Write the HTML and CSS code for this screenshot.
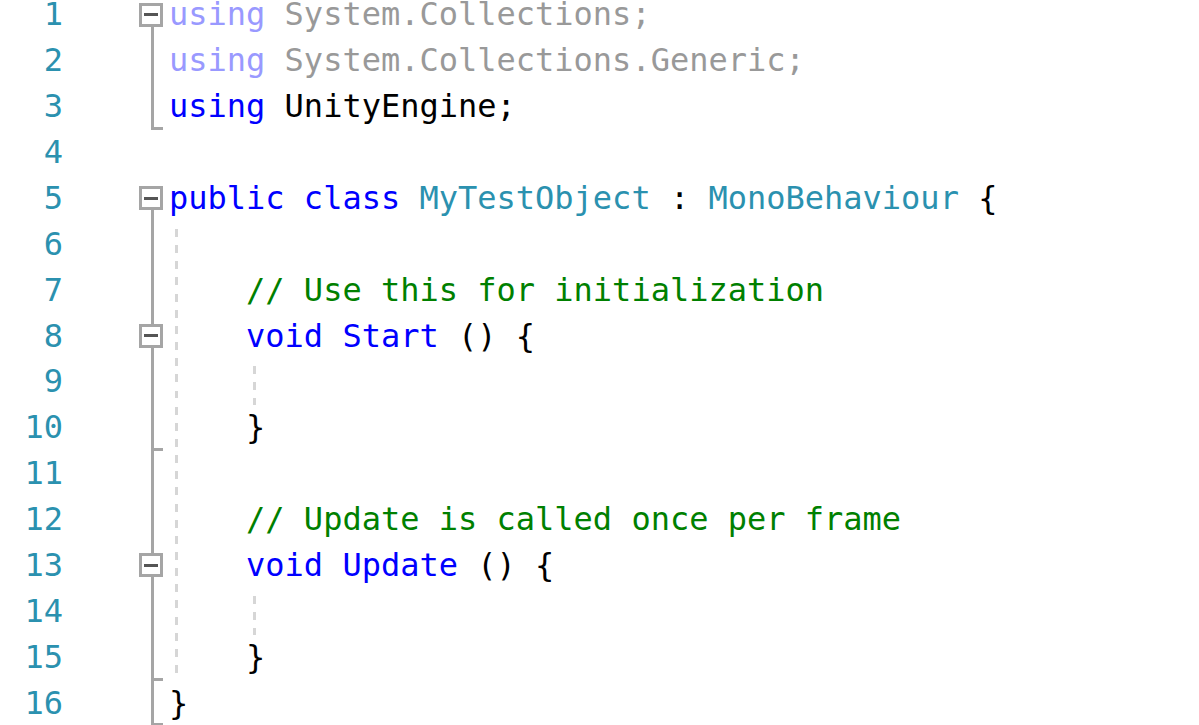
FILE: index.html
```html
<!DOCTYPE html>
<html>
<head>
<meta charset="utf-8">
<link rel="stylesheet" href="styles.css">
</head>
<body>
<div class="editor">
  <div class="row"><span class="ln">1</span><span class="fold f-top"><span class="box"></span></span><span class="code"><span class="fk">using</span> <span class="fd">System.Collections;</span></span></div>
  <div class="row"><span class="ln">2</span><span class="fold f-line"></span><span class="code"><span class="fk">using</span> <span class="fd">System.Collections.Generic;</span></span></div>
  <div class="row"><span class="ln">3</span><span class="fold f-end"></span><span class="code"><span class="kw">using</span> UnityEngine;</span></div>
  <div class="row"><span class="ln">4</span><span class="fold"></span><span class="code"></span></div>
  <div class="row"><span class="ln">5</span><span class="fold f-top"><span class="box"></span></span><span class="code"><span class="kw">public</span> <span class="kw">class</span> <span class="ty">MyTestObject</span> : <span class="ty">MonoBehaviour</span> {</span></div>
  <div class="block">
    <div class="row"><span class="ln">6</span><span class="fold f-line"></span><span class="code"></span></div>
    <div class="row"><span class="ln">7</span><span class="fold f-line"></span><span class="code">    <span class="cm">// Use this for initialization</span></span></div>
    <div class="row"><span class="ln">8</span><span class="fold f-line"><span class="box"></span></span><span class="code">    <span class="kw">void</span> <span class="kw">Start</span> () {</span></div>
    <div class="row guide2"><span class="ln">9</span><span class="fold f-line"></span><span class="code"></span></div>
    <div class="row"><span class="ln">10</span><span class="fold f-end"></span><span class="code">    }</span></div>
    <div class="row"><span class="ln">11</span><span class="fold f-line"></span><span class="code"></span></div>
    <div class="row"><span class="ln">12</span><span class="fold f-line"></span><span class="code">    <span class="cm">// Update is called once per frame</span></span></div>
    <div class="row"><span class="ln">13</span><span class="fold f-line"><span class="box"></span></span><span class="code">    <span class="kw">void</span> <span class="kw">Update</span> () {</span></div>
    <div class="row guide2"><span class="ln">14</span><span class="fold f-line"></span><span class="code"></span></div>
    <div class="row"><span class="ln">15</span><span class="fold f-end"></span><span class="code">    }</span></div>
  </div>
  <div class="row"><span class="ln">16</span><span class="fold f-end"></span><span class="code">}</span></div>
</div>
</body>
</html>
```
FILE: styles.css
```css
html, body {
  margin: 0;
  padding: 0;
  background: #ffffff;
  overflow: hidden;
}

.editor {
  margin-top: -7.6px;
  font-family: "DejaVu Sans Mono", "Liberation Mono", monospace;
  font-size: 32px;
  color: #000000;
}

.row {
  display: flex;
  align-items: stretch;
  height: 45.875px;
  line-height: 45.875px;
}

.ln {
  flex: none;
  width: 63px;
  text-align: right;
  color: #2b91af;
}

.fold {
  flex: none;
  width: 24px;
  margin-left: 76px;
  display: flex;
  align-items: center;
}

.code {
  margin-left: 6px;
  white-space: pre;
}

.f-line {
  background: linear-gradient(#a5a5a5, #a5a5a5) 12px 0 / 3px 100% no-repeat;
}

.f-end {
  background:
    linear-gradient(#a5a5a5, #a5a5a5) 12px 100% / 12px 3px no-repeat,
    linear-gradient(#a5a5a5, #a5a5a5) 12px 0 / 3px 100% no-repeat;
}

.f-top {
  background: linear-gradient(#a5a5a5, #a5a5a5) 12px 100% / 3px 50% no-repeat;
}

.box {
  width: 24px;
  height: 24px;
  box-sizing: border-box;
  border: 3px solid #a5a5a5;
  background: #ffffff;
  display: flex;
  align-items: center;
  justify-content: center;
  margin-top: -1px;
}

.box::after {
  content: "";
  width: 14px;
  height: 3px;
  background: #555555;
}

.block {
  background-image: repeating-linear-gradient(to bottom, transparent 0 7px, #d6d6d6 7px 15px, transparent 15px 16.15px);
  background-size: 3px 100%;
  background-position: 175px 0;
  background-repeat: no-repeat;
}

.guide2 {
  background-image: repeating-linear-gradient(to bottom, transparent 0 7px, #d6d6d6 7px 15px, transparent 15px 16.15px);
  background-size: 3px 100%;
  background-position: 253px 0;
  background-repeat: no-repeat;
}

.kw { color: #0000ff; }
.ty { color: #2b91af; }
.cm { color: #008000; }
.fk { color: #9999ff; }
.fd { color: #999999; }
```
